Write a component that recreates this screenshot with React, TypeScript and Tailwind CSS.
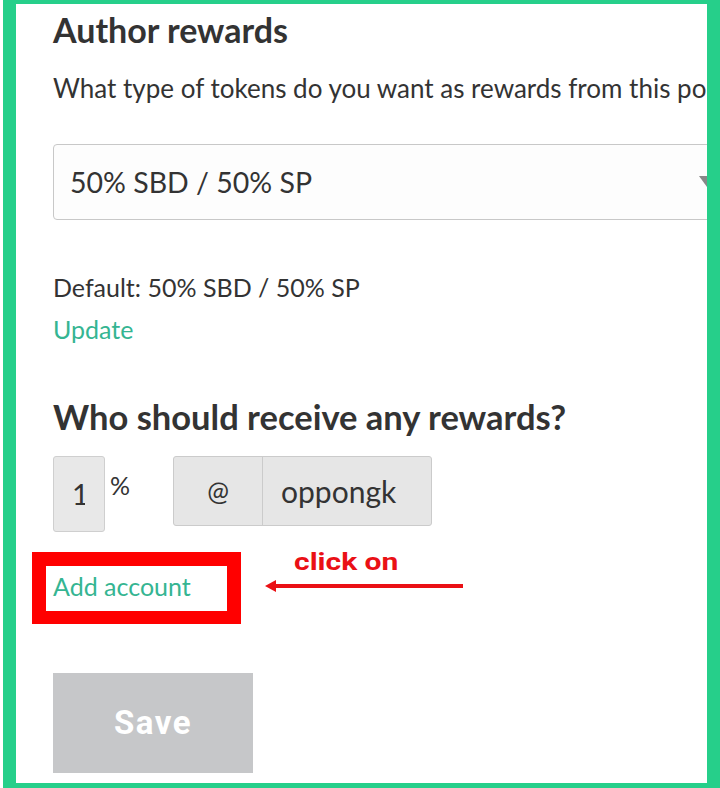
import React from 'react';

const sans = { fontFamily: 'Lato, "Noto Sans", sans-serif' };
const roboto = { fontFamily: 'Roboto, "Liberation Sans", sans-serif' };

const App: React.FC = () => {
  return (
    <div className="w-[720px] h-[788px] bg-white pl-[3px]">
      <div className="relative h-full overflow-hidden border-[#26cf8a] border-t-4 border-l-[13px] border-r-[13px] border-b-[5px] bg-white text-[#333]" style={sans}>
        <div className="pl-[37px] pt-[6px]">
          {/* author rewards */}
          <h2 className="text-[34px] leading-[40px] font-bold">Author rewards</h2>
          <p className="mt-[23px] text-[26px] leading-[30px] whitespace-nowrap">
            What type of tokens do you want as rewards from this post?
          </p>

          <div className="relative mt-[41px] w-[700px] h-[76px] flex items-center pl-[16px] rounded-[4px] border border-[#c8c8c8] bg-[#fdfdfd]">
            <span className="text-[28.5px] leading-[34px]">50% SBD / 50% SP</span>
            <span className="absolute left-[645px] top-[31px] w-0 h-0 border-l-[8px] border-r-[8px] border-t-[11px] border-l-transparent border-r-transparent border-t-[#888]"></span>
          </div>

          <p className="mt-[52px] text-[25px] leading-[30px]">Default: 50% SBD / 50% SP</p>
          <a className="block mt-[12px] text-[25px] leading-[30px] text-[#35b592]">Update</a>

          {/* beneficiaries */}
          <h2 className="mt-[53px] text-[34.5px] leading-[40px] font-bold">Who should receive any rewards?</h2>
          <div className="mt-[19px] flex items-start">
            <div className="w-[52px] h-[76px] flex items-center rounded-[3px] border border-[#cfcfcf] bg-[#e8e8e8]">
              <div className="ml-[18px] w-[13px] overflow-hidden text-[29px] leading-[34px]">100</div>
            </div>
            <span className="ml-[5px] mt-[14px] text-[25px] leading-[30px]">%</span>
            <div className="ml-[43px] flex h-[70px] rounded-[3px] border border-[#cbcbcb] bg-[#e6e6e6]">
              <div className="w-[89px] flex items-center justify-center border-r border-[#cbcbcb] text-[26px]">@</div>
              <div className="w-[168px] flex items-center pl-[18px] text-[30px]">oppongk</div>
            </div>
          </div>

          <div className="relative mt-[20px] h-[72px] pt-[19px]">
            <a className="block text-[25px] leading-[30px] text-[#35b592]">Add account</a>
            {/* annotation */}
            <div className="absolute left-[-21px] top-0 w-[209px] h-[72px] border-[#ff0000] border-l-[14px] border-r-[14px] border-t-[14px] border-b-[13px]"></div>
            <div className="absolute left-[241px] top-[-4px] origin-left scale-x-125 text-[24px] leading-[28px] font-bold text-[#ea1015]" style={roboto}>
              click on
            </div>
            <svg className="absolute left-[212px] top-[27px]" width="200" height="14" viewBox="0 0 200 14">
              <line x1="8" y1="7" x2="198" y2="7" stroke="#ea1015" strokeWidth="4" />
              <path d="M0 7 L11 1 L11 13 Z" fill="#ea1015" />
            </svg>
          </div>

          <button className="mt-[49px] w-[200px] h-[100px] bg-[#c6c7c9] text-white text-[33px] tracking-[1.5px] font-bold" style={roboto}>
            Save
          </button>
        </div>
      </div>
    </div>
  );
};

export default App;
